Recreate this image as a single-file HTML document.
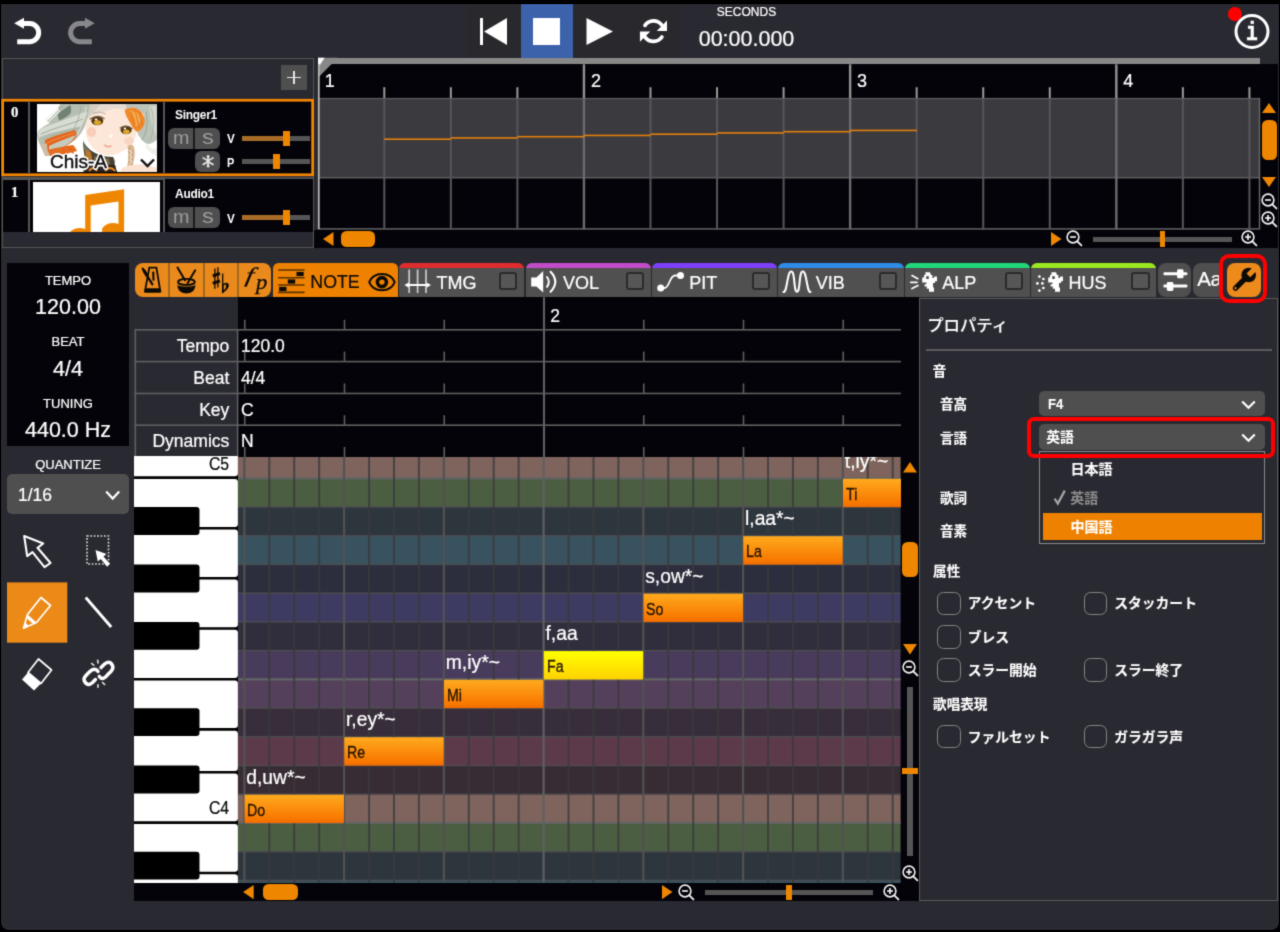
<!DOCTYPE html>
<html lang="ja"><head><meta charset="utf-8"><title>Editor</title>
<style>
*{box-sizing:border-box;margin:0;padding:0}
html,body{width:1280px;height:932px;background:#000;overflow:hidden}
body{font-family:"Liberation Sans","Noto Sans CJK JP",sans-serif;color:#fff;position:relative;-webkit-text-stroke-width:0.22px}
#root{position:absolute;left:0;top:0;width:1280px;height:932px;filter:url(#soft)}
#app{position:absolute;left:1.2px;top:4.2px;width:1277.6px;height:926.2px;background:#292931;border-radius:0 0 7.5px 7.5px;overflow:hidden}
.a{position:absolute}
.blk{background:#030309}
.t{position:absolute;white-space:nowrap;line-height:1}
.c{text-align:center}
.jp{font-family:"Liberation Sans","Noto Sans CJK JP",sans-serif;font-weight:bold;-webkit-text-stroke-width:0}
svg{position:absolute;overflow:visible}
.or{background:#ee8600}
.btn{background:#4f4f4f;border-radius:6px}
.tab{position:absolute;top:262.9px;height:34.4px;width:125.2px;background:#505050;border-radius:6px 6px 0 0;overflow:hidden}
.tab i{position:absolute;left:0;top:0;right:0;height:5px}
.tab b{position:absolute;left:100.2px;top:9.2px;width:18.2px;height:18px;border:2.5px solid #2b2b2b;border-radius:3px;background:#565656}
.tab span{position:absolute;left:37.4px;top:10.7px;font-size:18px;line-height:1;font-weight:normal}
.cb{position:absolute;width:23.6px;height:23.8px;border:1.9px solid #848484;border-radius:6.5px;background:#292931}
.pl{position:absolute;-webkit-text-stroke-width:0.12px;font-size:14px;line-height:1;white-space:nowrap;font-family:"Liberation Sans","Noto Sans CJK JP",sans-serif;font-weight:bold;color:#fff}
</style></head>
<body>
<svg width="0" height="0" style="position:absolute"><defs><filter id="soft" x="0" y="0" width="100%" height="100%" color-interpolation-filters="sRGB"><feConvolveMatrix order="3" kernelMatrix="1 4 1 4 20 4 1 4 1" divisor="40" edgeMode="duplicate" preserveAlpha="true"/></filter></defs></svg>
<div id="root">
<div id="app"></div>
<!-- toolbar -->
<div class="a" style="left:467px;top:4.2px;width:213px;height:53.8px;background:#28282d"></div>
<svg style="left:0;top:0" width="60" height="60" viewBox="0 0 60 60"><path d="M17.2 41.7 H29.6 A9.1 9.1 0 0 0 29.6 23.5 H23" fill="none" stroke="#fff" stroke-width="5"/><path d="M14.2 23.3 L24 17.8 V28.8 Z" fill="#fff"/></svg>
<svg style="left:0;top:0" width="120" height="60" viewBox="0 0 120 60"><path d="M91.8 41.7 H79.7 A9.1 9.1 0 0 1 79.7 23.5 H86" fill="none" stroke="#88888c" stroke-width="5"/><path d="M94.7 23.3 L85 17.8 V28.8 Z" fill="#88888c"/></svg>
<svg style="left:480px;top:18px" width="28" height="27" viewBox="0 0 28 27"><rect x="0" y="0" width="3" height="27" fill="#fff"/><path d="M4 13.5 L27 0 V27 Z" fill="#fff"/></svg>
<div class="a" style="left:520.7px;top:4.2px;width:52.3px;height:53.6px;background:#3b62ab"></div>
<div class="a" style="left:533px;top:18px;width:27px;height:27px;background:#fff"></div>
<svg style="left:586px;top:18px" width="27" height="27" viewBox="0 0 27 27"><path d="M0.5 0 L27 13.5 L0.5 27 Z" fill="#fff"/></svg>
<svg style="left:0;top:0" width="1280" height="60" viewBox="0 0 1280 60"><g fill="none" stroke="#fff" stroke-width="3.7" stroke-linecap="round"><path d="M645.0 25.4 A10.3 10.3 0 0 1 661.6 24.9"/><path d="M661.9 37 A10.3 10.3 0 0 1 645.4 37.5"/></g><path d="M667 20.6 V30.9 H656.7 Z" fill="#fff"/><path d="M639.95 41.8 V31.4 H650.3 Z" fill="#fff"/></svg>
<div class="t c" style="left:646.5px;top:6.3px;width:200px;font-size:12px;">SECONDS</div>
<div class="t c" style="left:646.5px;top:28.6px;width:200px;font-size:21.5px;">00:00.000</div>
<svg style="left:1226px;top:5px" width="50" height="50" viewBox="0 0 50 50"><circle cx="8.9" cy="9" r="7" fill="#f00"/><circle cx="26" cy="26.5" r="16" fill="#292931" stroke="#fff" stroke-width="3"/></svg>
<div class="t c" style="left:1232.3px;top:20.4px;width:40px;font-size:26.5px;font-family:'Liberation Mono',monospace;font-weight:bold;-webkit-text-stroke-width:0.5px;transform:scaleX(0.74)">i</div>
<!-- timeline -->
<div class="a blk" style="left:318px;top:58px;width:942px;height:172px;"></div>
<div class="a blk" style="left:314px;top:229.5px;width:964px;height:18.5px;"></div>
<div class="a blk" style="left:1260px;top:64px;width:18px;height:184px;"></div>
<div class="a" style="left:318px;top:57.6px;width:942px;height:6.9px;background:#888"></div>
<div class="a" style="left:318px;top:98.5px;width:942px;height:79px;background:#3a3a3f"></div>
<div class="t" style="left:324.8px;top:72.2px;font-size:18px;">1</div>
<div class="t" style="left:590.9px;top:72.2px;font-size:18px;">2</div>
<div class="t" style="left:857.1px;top:72.2px;font-size:18px;">3</div>
<div class="t" style="left:1123.3px;top:72.2px;font-size:18px;">4</div>
<svg style="left:0;top:0" width="1280" height="260" viewBox="0 0 1280 260"><rect x="318" y="97.9" width="942" height="1.3" fill="#5c5c5e"/><rect x="318" y="176.9" width="942" height="1.6" fill="#5c5c5e"/><rect x="318" y="228.2" width="942" height="1.4" fill="#6a6a6a"/><rect x="383.30" y="87.2" width="2" height="11" fill="#9a9a9a"/><rect x="383.30" y="98.3" width="2" height="131" fill="#56565a"/><rect x="449.85" y="87.2" width="2" height="11" fill="#9a9a9a"/><rect x="449.85" y="98.3" width="2" height="131" fill="#56565a"/><rect x="516.39" y="87.2" width="2" height="11" fill="#9a9a9a"/><rect x="516.39" y="98.3" width="2" height="131" fill="#56565a"/><rect x="582.74" y="64.3" width="2.4" height="34" fill="#929292"/><rect x="582.74" y="98.3" width="2.4" height="131" fill="#6c6c6e"/><rect x="649.49" y="87.2" width="2" height="11" fill="#9a9a9a"/><rect x="649.49" y="98.3" width="2" height="131" fill="#56565a"/><rect x="716.04" y="87.2" width="2" height="11" fill="#9a9a9a"/><rect x="716.04" y="98.3" width="2" height="131" fill="#56565a"/><rect x="782.59" y="87.2" width="2" height="11" fill="#9a9a9a"/><rect x="782.59" y="98.3" width="2" height="131" fill="#56565a"/><rect x="848.93" y="64.3" width="2.4" height="34" fill="#929292"/><rect x="848.93" y="98.3" width="2.4" height="131" fill="#6c6c6e"/><rect x="915.68" y="87.2" width="2" height="11" fill="#9a9a9a"/><rect x="915.68" y="98.3" width="2" height="131" fill="#56565a"/><rect x="982.23" y="87.2" width="2" height="11" fill="#9a9a9a"/><rect x="982.23" y="98.3" width="2" height="131" fill="#56565a"/><rect x="1048.78" y="87.2" width="2" height="11" fill="#9a9a9a"/><rect x="1048.78" y="98.3" width="2" height="131" fill="#56565a"/><rect x="1115.13" y="64.3" width="2.4" height="34" fill="#929292"/><rect x="1115.13" y="98.3" width="2.4" height="131" fill="#6c6c6e"/><rect x="1181.87" y="87.2" width="2" height="11" fill="#9a9a9a"/><rect x="1181.87" y="98.3" width="2" height="131" fill="#56565a"/><rect x="1248.42" y="87.2" width="2" height="11" fill="#9a9a9a"/><rect x="1248.42" y="98.3" width="2" height="131" fill="#56565a"/><rect x="1258.8" y="98" width="1.4" height="131" fill="#6a6a6a"/><path d="M318 57.8 H337.8 L318 77.8 Z" fill="#888"/><path d="M318 57.8 H324.6 L318 68 Z" fill="#fff"/><rect x="317.9" y="64" width="1.8" height="165" fill="#b4b4b4"/><rect x="384.30" y="138.40" width="66.748" height="1.6" fill="#e4800c"/><rect x="450.85" y="137.15" width="66.748" height="1.6" fill="#e4800c"/><rect x="517.39" y="135.90" width="66.748" height="1.6" fill="#e4800c"/><rect x="583.94" y="134.65" width="66.748" height="1.6" fill="#e4800c"/><rect x="650.49" y="133.40" width="66.748" height="1.6" fill="#e4800c"/><rect x="717.04" y="132.15" width="66.748" height="1.6" fill="#e4800c"/><rect x="783.59" y="130.90" width="66.748" height="1.6" fill="#e4800c"/><rect x="850.13" y="129.65" width="66.748" height="1.6" fill="#e4800c"/></svg>
<svg style="left:322.5px;top:232px" width="10.5" height="14" viewBox="0 0 10.5 14"><path d="M10.5 0 V14 L0 7.0 Z" fill="#ee8600"/></svg>
<div class="a" style="left:340.5px;top:231px;width:34.5px;height:16px;background:#ee8600;border-radius:5.5px"></div>
<svg style="left:1050.8px;top:232px" width="10.5" height="14" viewBox="0 0 10.5 14"><path d="M0 0 V14 L10.5 7.0 Z" fill="#ee8600"/></svg>
<svg style="left:1066.2px;top:230.0px" width="17" height="17" viewBox="0 0 17 17"><circle cx="7" cy="7" r="5.9" fill="none" stroke="#f2f2f2" stroke-width="1.6"/><path d="M11.3 11.3 L15.4 15.4" stroke="#f2f2f2" stroke-width="1.9" stroke-linecap="round"/><path d="M4.1 7 H9.9" stroke="#f2f2f2" stroke-width="1.7"/></svg>
<div class="a" style="left:1093px;top:236.5px;width:139px;height:5px;background:#555"></div>
<div class="a" style="left:1159.9px;top:231px;width:5.5px;height:15.6px;background:#ee8600"></div>
<svg style="left:1241.2px;top:230.0px" width="17" height="17" viewBox="0 0 17 17"><circle cx="7" cy="7" r="5.9" fill="none" stroke="#f2f2f2" stroke-width="1.6"/><path d="M11.3 11.3 L15.4 15.4" stroke="#f2f2f2" stroke-width="1.9" stroke-linecap="round"/><path d="M4.1 7 H9.9" stroke="#f2f2f2" stroke-width="1.7"/><path d="M7 4.1 V9.9" stroke="#f2f2f2" stroke-width="1.7"/></svg>
<svg style="left:1262px;top:103px" width="14" height="10" viewBox="0 0 14 10"><path d="M0 10 H14 L7.0 0 Z" fill="#ee8600"/></svg>
<div class="a" style="left:1261.5px;top:120px;width:15.5px;height:40px;background:#ee8600;border-radius:5.5px"></div>
<svg style="left:1262px;top:177px" width="14" height="10" viewBox="0 0 14 10"><path d="M0 0 H14 L7.0 10 Z" fill="#ee8600"/></svg>
<svg style="left:1260.7px;top:192.5px" width="17" height="17" viewBox="0 0 17 17"><circle cx="7" cy="7" r="5.9" fill="none" stroke="#f2f2f2" stroke-width="1.6"/><path d="M11.3 11.3 L15.4 15.4" stroke="#f2f2f2" stroke-width="1.9" stroke-linecap="round"/><path d="M4.1 7 H9.9" stroke="#f2f2f2" stroke-width="1.7"/></svg>
<svg style="left:1260.7px;top:211.0px" width="17" height="17" viewBox="0 0 17 17"><circle cx="7" cy="7" r="5.9" fill="none" stroke="#f2f2f2" stroke-width="1.6"/><path d="M11.3 11.3 L15.4 15.4" stroke="#f2f2f2" stroke-width="1.9" stroke-linecap="round"/><path d="M4.1 7 H9.9" stroke="#f2f2f2" stroke-width="1.7"/><path d="M7 4.1 V9.9" stroke="#f2f2f2" stroke-width="1.7"/></svg>
<!-- tracks -->
<div class="a" style="left:1.5px;top:58px;width:312.5px;height:190px;border:1.2px solid #545454"></div>
<div class="a" style="left:281px;top:65px;width:26px;height:25px;background:#4f4f4f"></div>
<div class="a" style="left:287.2px;top:76.7px;width:13.4px;height:1.7px;background:#e4e4e4"></div>
<div class="a" style="left:293.1px;top:70.7px;width:1.7px;height:13.6px;background:#e4e4e4"></div>
<svg style="left:0;top:0" width="320" height="180" viewBox="0 0 320 180"><rect x="2.65" y="100.25" width="310" height="74.5" fill="#030309" stroke="#f58600" stroke-width="2.7"/></svg>
<div class="a" style="left:27.7px;top:101px;width:2.5px;height:72.5px;background:#555"></div>
<div class="a" style="left:162.5px;top:101px;width:2.5px;height:72.5px;background:#555"></div>
<div class="t" style="left:11px;top:105.4px;font-size:14.8px;font-family:'Liberation Serif',serif;font-weight:bold">0</div>
<div class="a" style="left:36.5px;top:103.5px;width:120.2px;height:68.3px;background:#fff;overflow:hidden"><svg style="left:0;top:0" width="120.2" height="68.3" viewBox="0 0 120 68.3" preserveAspectRatio="none"><defs><filter id="tb" x="-5%" y="-5%" width="110%" height="110%"><feGaussianBlur stdDeviation="0.55"/></filter></defs><rect width="120" height="68.3" fill="#fff"/><g filter="url(#tb)"><path d="M52 -1 H90 C95 10 100 22 99 30 C97 39 91 45 84 48 C78 51.5 72 52 66 50.5 C58 48 51 40 49 31 C47.5 20 49 8 52 -1 Z" fill="#fde7d8"/><ellipse cx="54.5" cy="28" rx="4.5" ry="5" fill="#f6c4b0" opacity="0.75"/><ellipse cx="92" cy="37" rx="5" ry="4" fill="#f8cdb9" opacity="0.7"/><path d="M58 -1 H92 L90 6 C82 3.5 72 5 64 8.5 C58 11 54 12 51 11 C52 6 54 2 58 -1 Z" fill="#e6dbd1"/><path d="M50 0 H64 C60 4 56 9 50 15 Z" fill="#d3cdc2"/><path d="M88 -1 H121 V34 C118 38 114 40 110 40 C106 38 103 34 100 29 C104 24 107 18 107 11 C104 6 98 4 90 6 Z" fill="#bcc3b8"/><path d="M112 2 H121 V33 C117 30 114 22 112 2 Z" fill="#d2d6cd"/><path d="M109 8 C111 18 110 28 105 36" fill="none" stroke="#9aa498" stroke-width="0.9" stroke-linecap="round" /><path d="M114 4 C117 14 117 26 113 37" fill="none" stroke="#a4ada1" stroke-width="0.8" stroke-linecap="round" /><path d="M110 40 C112 44 116 46 121 44 V52 C114 50 110 46 108 42 Z" fill="#eef0ea"/><path d="M87.5 6 C92 3 98 3 102 6 C106 9 108 14 107.5 19 C106 24 103 27 100 28 C97 26 95 23 93 19 C90 14 88 10 87.5 6 Z" fill="#f0892a"/><path d="M92 7 C97 6 102 9 104 14 C104 19 101 22 98 23 C99 17 96 11 92 7 Z" fill="#f6a648"/><path d="M94 8 L98 24 M98 6 L102 24 M102 8 L105 21" fill="none" stroke="#d4701c" stroke-width="0.7" stroke-linecap="round" /><path d="M24 -1 H53 C52 8 50 17 47 24 C44 30 40 35 34 39 C26 44 18 48 9 51 C6 47 3 42 1 36 C0 32 0 29 2 26 C5 23 9 21 13 19 C11 18 10 17 9 15.5 C13 12 17 8 20 5 C21.5 3 23 1 24 -1 Z" fill="#b6beb1"/><path d="M33 1 C29 4 24 7 21 10 C21 13 21.5 15 22 16.5 C26 15 30 13 33 10 C34.5 7 34.5 4 33 1 Z" fill="#6f8273"/><path d="M3 25 C14 20 28 16 40 11 C44 9 47 8 50 8 C49 13 47 18 44 22 C34 25 20 27 8 31 C5 32 3 33 1.5 34 C1 31 1.5 28 3 25 Z" fill="#d8dcd2"/><path d="M8 15 C12 11 17 7 21 4 L23 7 C19 11 15 15 12 18 Z" fill="#f6f6f2"/><path d="M4 30 C16 24 32 21 46 15" fill="none" stroke="#9aa598" stroke-width="0.9" stroke-linecap="round" /><path d="M6 35 C18 29 32 26 44 24" fill="none" stroke="#a7b0a4" stroke-width="0.9" stroke-linecap="round" /><path d="M26 2 C22 6 16 12 11 17" fill="none" stroke="#8f9b8e" stroke-width="0.8" stroke-linecap="round" /><path d="M44 2 C43 10 40 20 35 28" fill="none" stroke="#a3ac9f" stroke-width="0.9" stroke-linecap="round" /><path d="M49 3 C48 12 45 22 40 31" fill="none" stroke="#d8dcd2" stroke-width="1.1" stroke-linecap="round" /><path d="M8 36 C16 32 27 29 38 26 C40 29 40 32 38 35 C32 40 25 45 18 49 C14 49 11 48 9 46 C8 43 7.5 39 8 36 Z" fill="#e5651c"/><path d="M12 42 C20 38 30 34 39 31 C37 35 33 39 28 42 C23 45 17 48 13 50 C12 47 12 45 12 42 Z" fill="#c5cbbf"/><path d="M11 46 C18 44 27 42 36 41 C38 43 39 45 40 47 C36 48 32 49 29 50 C27 50 25 50 23 52 H13 C12 50 11 48 11 46 Z" fill="#e66c20"/><path d="M10 39 C18 35 28 32 37 29" fill="none" stroke="#f4a060" stroke-width="0.8" stroke-linecap="round" /><path d="M26 44 L27 50 M32 43 L36 49" fill="none" stroke="#e0641a" stroke-width="1.4" stroke-linecap="round" /><path d="M4 40 C6 39 8 39 10 40 C10 45 11 49 13 52 H8 C6 48 4.5 44 4 40 Z" fill="#cdbda6"/><path d="M46 37 C48 41 52 46 58 49 C64 52 70 53 76 53 C78 56 78 60 77 63 L81 69 H46 C47 64 48 59 48 55 C47 49 46 43 46 37 Z" fill="#4a4034"/><path d="M46 37 C48 42 50 45 53 47 L52 52 C49 49 47 45 46 41 Z" fill="#6e7a68"/><path d="M48.0 45.0 L54.0 48.5 L55.0 56.0 L48.5 55.0 Z" fill="#b8782a" /><path d="M57.0 52.0 L66.0 54.0 L72.0 54.5 L73.0 62.0 L58.0 62.0 Z" fill="#77664a" /><path d="M61.0 53.0 L64.0 53.5 L64.0 61.0 L61.0 61.0 Z" fill="#c89a4a" /><path d="M50.0 60.0 L78.0 61.0 L80.0 69.0 L48.0 69.0 Z" fill="#2a2420" /><path d="M52 67 Q56 61 60 67 M68 67 Q73 61 78 67" fill="none" stroke="#ea8c28" stroke-width="1.9"/><path d="M90.5 42 C92.5 40.5 95 40.5 96.5 42 C98 46 98 52 96.5 57 C96 60 95.5 62 95 64 H90 C90.5 60 91 56 91 52 C91 48 90.5 45 90.5 42 Z" fill="#d9b892"/><path d="M92 44 L95.5 47 M92 48.5 L95.5 51.5 M92 53 L95.5 56 M92 57.5 L95 60" fill="none" stroke="#a8703c" stroke-width="0.9" stroke-linecap="round" /><path d="M92.6 45.0 L94.6 45.0 L94.6 60.0 L92.6 60.0 Z" fill="#f5eadc" opacity="0.6"/><path d="M85 64 C92 61 100 60 108 61 C113 62 117 63 121 64 V69 H83 Z" fill="#fbe2d2"/><ellipse cx="60.2" cy="16.8" rx="6" ry="4.4" fill="#54380f"/><ellipse cx="60.4" cy="18.6" rx="3.6" ry="2.4" fill="#dba62a"/><ellipse cx="59" cy="15.4" rx="1.4" ry="1" fill="#fff"/><path d="M53 15 Q60 10 67 14.5" fill="none" stroke="#6b5a48" stroke-width="1.2" stroke-linecap="round" /><ellipse cx="89" cy="26" rx="5.6" ry="4.2" fill="#54380f"/><ellipse cx="89.2" cy="27.8" rx="3.3" ry="2.3" fill="#dba62a"/><ellipse cx="87.8" cy="24.6" rx="1.3" ry="1" fill="#fff"/><path d="M83 24 Q89 20 95 24.5" fill="none" stroke="#6b5a48" stroke-width="1.1" stroke-linecap="round" /><path d="M56 9 Q62 6.5 68 9.5" fill="none" stroke="#b9a89a" stroke-width="0.9" stroke-linecap="round" /><ellipse cx="73.6" cy="32" rx="2" ry="1.6" fill="#fff"/><path d="M67.5 41.2 Q70.5 43.6 74 42" fill="none" stroke="#f0a48e" stroke-width="1.5" stroke-linecap="round" /></g></svg></div>
<div class="t" style="left:50px;top:152.2px;font-size:19px;color:#0a0a0a;-webkit-text-stroke:0.35px #0a0a0a;text-shadow:1.6px 0px 0.3px #fff,-1.6px 0px 0.3px #fff,0px 1.6px 0.3px #fff,0px -1.6px 0.3px #fff,1.15px 1.15px 0.3px #fff,-1.15px 1.15px 0.3px #fff,1.15px -1.15px 0.3px #fff,-1.15px -1.15px 0.3px #fff,1.5px 0.6px 0.3px #fff,-1.5px 0.6px 0.3px #fff,1.5px -0.6px 0.3px #fff,-1.5px -0.6px 0.3px #fff,0.6px 1.5px 0.3px #fff,-0.6px 1.5px 0.3px #fff,0.6px -1.5px 0.3px #fff,-0.6px -1.5px 0.3px #fff">Chis-A</div>
<svg style="left:140px;top:158px" width="15" height="10" viewBox="0 0 15 10"><path d="M1 1.5 L7.5 8 L14 1.5" fill="none" stroke="#111" stroke-width="2.4"/></svg>
<div class="t jp" style="left:174.5px;top:109px;font-size:12.5px;font-weight:bold;letter-spacing:-0.3px;transform:scaleX(0.96);transform-origin:0 0">Singer1</div>
<div class="a btn" style="left:168.3px;top:127.6px;width:51.6px;height:21.2px;"></div>
<div class="a" style="left:193.2px;top:127.6px;width:2px;height:21.2px;background:#1c1c20"></div>
<div class="t" style="left:172.6px;top:127.7px;font-size:19px;color:#9c9c9c;-webkit-text-stroke-width:0;transform:scaleX(1.04);transform-origin:0 0">m</div>
<div class="t" style="left:201.6px;top:127.9px;font-size:19.4px;color:#9c9c9c;-webkit-text-stroke-width:0;transform:scaleX(1.22);transform-origin:0 0">s</div>
<div class="t jp" style="left:227px;top:132.4px;font-size:13.6px;font-weight:bold;transform:scaleX(0.86);transform-origin:0 0">V</div>
<div class="a" style="left:242px;top:136px;width:68px;height:5px;background:#555"></div>
<div class="a" style="left:242px;top:136px;width:41px;height:5px;background:#a86c28"></div>
<div class="a" style="left:283px;top:131px;width:7px;height:15px;background:#ee8600"></div>
<div class="a btn" style="left:195px;top:151px;width:24.8px;height:20.5px;"></div>
<svg style="left:195.5px;top:151px" width="24.5" height="20" viewBox="0 0 24.5 20"><g stroke="#e4e4e4" stroke-width="1.7" fill="none" stroke-linecap="round"><path d="M12.1 6 V14.4 M7.2 7 Q10 8 12.1 10.2 Q14.2 8 17 7 M7.2 13.4 Q10 12.4 12.1 10.2 Q14.2 12.4 17 13.4"/></g><g fill="#e4e4e4"><circle cx="12.1" cy="5.4" r="1.5"/><circle cx="12.1" cy="15" r="1.5"/></g></svg>
<div class="t jp" style="left:227.2px;top:155.6px;font-size:13.6px;font-weight:bold;transform:scaleX(0.8);transform-origin:0 0">P</div>
<div class="a" style="left:242px;top:158.5px;width:68px;height:5px;background:#555"></div>
<div class="a" style="left:272.5px;top:153.5px;width:7px;height:15px;background:#ee8600"></div>
<div class="a" style="left:2.6px;top:179px;width:310.4px;height:53px;background:#030309"></div>
<div class="a" style="left:2.6px;top:176.6px;width:162.4px;height:3px;background:#555"></div>
<div class="a" style="left:165px;top:177.4px;width:148px;height:1.4px;background:#4c5058"></div>
<div class="a" style="left:27.7px;top:178px;width:2.5px;height:54px;background:#555"></div>
<div class="a" style="left:162.5px;top:178px;width:2.5px;height:54px;background:#555"></div>
<div class="t" style="left:11px;top:184.6px;font-size:14.8px;font-family:'Liberation Serif',serif;font-weight:bold">1</div>
<div class="a" style="left:32.8px;top:182.4px;width:127.4px;height:49.6px;background:#fff;overflow:hidden"><svg style="left:-32.8px;top:-182.4px" width="200" height="260" viewBox="0 0 200 260"><path d="M85.2 195 L124.1 189.3 V234 H118.5 V201.4 L90.7 205.6 V238 H85.2 Z" fill="#ee8600"/><ellipse cx="79.8" cy="235.4" rx="10.8" ry="7.4" fill="#ee8600"/><ellipse cx="113" cy="230.4" rx="11" ry="7.4" fill="#ee8600"/></svg></div>
<div class="t jp" style="left:174.5px;top:188.2px;font-size:12.5px;font-weight:bold;letter-spacing:-0.3px;transform:scaleX(0.96);transform-origin:0 0">Audio1</div>
<div class="a btn" style="left:168.3px;top:206.6px;width:51.6px;height:21.2px;"></div>
<div class="a" style="left:193.2px;top:206.6px;width:2px;height:21.2px;background:#1c1c20"></div>
<div class="t" style="left:172.6px;top:206.7px;font-size:19px;color:#9c9c9c;-webkit-text-stroke-width:0;transform:scaleX(1.04);transform-origin:0 0">m</div>
<div class="t" style="left:201.6px;top:206.9px;font-size:19.4px;color:#9c9c9c;-webkit-text-stroke-width:0;transform:scaleX(1.22);transform-origin:0 0">s</div>
<div class="t jp" style="left:227px;top:211.6px;font-size:13.6px;font-weight:bold;transform:scaleX(0.86);transform-origin:0 0">V</div>
<div class="a" style="left:242px;top:215px;width:68px;height:5px;background:#555"></div>
<div class="a" style="left:242px;top:215px;width:41px;height:5px;background:#a86c28"></div>
<div class="a" style="left:283px;top:210px;width:7px;height:15px;background:#ee8600"></div>
<!-- left panel -->
<div class="a blk" style="left:7px;top:263px;width:122px;height:183px;"></div>
<div class="t c" style="left:-32.0px;top:273.8px;width:200px;font-size:13px;">TEMPO</div>
<div class="t c" style="left:-32.0px;top:297.2px;width:200px;font-size:21.5px;">120.00</div>
<div class="t c" style="left:-32.0px;top:335.3px;width:200px;font-size:13px;">BEAT</div>
<div class="t c" style="left:-32.0px;top:358.8px;width:200px;font-size:21.5px;">4/4</div>
<div class="t c" style="left:-32.0px;top:396.5px;width:200px;font-size:13px;">TUNING</div>
<div class="t c" style="left:-32.0px;top:419.8px;width:200px;font-size:21.5px;">440.0 Hz</div>
<div class="t c" style="left:-32.0px;top:458px;width:200px;font-size:13px;">QUANTIZE</div>
<div class="a" style="left:7px;top:474px;width:122px;height:40px;background:#4f4f4f;border-radius:5px"></div>
<div class="t" style="left:18px;top:486.5px;font-size:17.5px;">1/16</div>
<svg style="left:105px;top:490px" width="16" height="11" viewBox="0 0 16 11"><path d="M1.2 1.5 L7.7 8.6 L14.2 1.5" fill="none" stroke="#fff" stroke-width="2.2"/></svg>
<svg style="left:0;top:0" width="80" height="660" viewBox="0 0 80 660"><rect x="7" y="582.4" width="60.3" height="60.3" fill="#ec8a18"/></svg>
<svg style="left:20px;top:532px" width="36" height="38" viewBox="0 0 36 38"><path d="M4.2 4 L23.2 11.5 L17.5 15.8 L30.5 31 L24.5 35.2 L12.5 20.2 L7.2 24.2 Z" fill="none" stroke="#fff" stroke-width="2.1" stroke-linejoin="round"/></svg>
<svg style="left:84px;top:533px" width="30" height="36" viewBox="0 0 30 36"><rect x="3" y="3" width="21.5" height="28" fill="none" stroke="#e0e0e0" stroke-width="1.6" stroke-dasharray="1.7 1.7"/><path d="M11.5 17 L22.5 21 L19.5 23.5 L26 31 L23 33.8 L16.8 26 L13.8 28.5 Z" fill="#fff"/></svg>
<svg style="left:20px;top:594px" width="36" height="38" viewBox="0 0 36 38"><path d="M21 3.5 L30.5 11.5 L16.5 28.5 L3.5 34.2 L7.5 20.5 Z" fill="none" stroke="#fff" stroke-width="1.7" stroke-linejoin="round"/><path d="M7.5 20.5 L16.5 28.5 L13 30 L6.6 24 Z" fill="#fff"/><path d="M5.2 28.5 L8.8 31.8 L3.5 34.2 Z" fill="#fff"/></svg>
<svg style="left:82px;top:594px" width="34" height="38" viewBox="0 0 34 38"><path d="M3.7 3.5 L29.2 33" stroke="#fff" stroke-width="2.8" fill="none"/></svg>
<svg style="left:19px;top:655px" width="38" height="38" viewBox="0 0 38 38"><path d="M19.5 4 L32.5 15 L22 28.5 L9 17.5 Z" fill="none" stroke="#fff" stroke-width="1.7" stroke-linejoin="round"/><path d="M9 17.5 L22 28.5 L15 35.5 L3 24.5 Z" fill="#fff"/></svg>
<svg style="left:0;top:0" width="1280" height="932" viewBox="0 0 1280 932"><g fill="none" stroke="#fff" stroke-width="3.5" stroke-linecap="round" stroke-linejoin="round"><path d="M97.95 671.44 Q96.6 669.2 94.2 669.2 Q92.2 669.3 89.65 671.83 L86.18 675.3 Q83.2 678.3 84.4 681 Q86 684.6 89.2 684.4 Q91 684.2 92.36 682.64 L95.44 679.55"/><path d="M99.31 676.46 Q100.7 678.4 102.8 678.4 Q104.8 678.3 107.8 674.53 L110.89 671.44 Q113.6 668.6 112.6 665.8 Q111 662.2 107.8 662.37 Q106 662.6 104.32 664.3 L101.04 667.58"/></g><g stroke="#dcdcdc" stroke-width="1.7" fill="none"><path d="M97.57 659.7 L98.15 663.7 M91.2 663.1 L94.3 665.7 M97.95 684.2 V687.7 M102.2 682.2 L105.1 685"/></g></svg>
<!-- editor -->
<div class="a blk" style="left:134.3px;top:297.3px;width:785px;height:604px;"></div>
<div class="a" style="left:134.3px;top:297.3px;width:103.9px;height:32.5px;background:#292931"></div>
<div class="a" style="left:134.3px;top:330px;width:103.9px;height:127px;background:#292931"></div>
<div class="t" style="left:135px;top:338.0px;width:94.3px;text-align:right;font-size:17.5px">Tempo</div>
<div class="t" style="left:241px;top:338.0px;font-size:17.5px;">120.0</div>
<div class="t" style="left:135px;top:369.8px;width:94.3px;text-align:right;font-size:17.5px">Beat</div>
<div class="t" style="left:241px;top:369.8px;font-size:17.5px;">4/4</div>
<div class="t" style="left:135px;top:401.6px;width:94.3px;text-align:right;font-size:17.5px">Key</div>
<div class="t" style="left:241px;top:401.6px;font-size:17.5px;">C</div>
<div class="t" style="left:135px;top:433.4px;width:94.3px;text-align:right;font-size:17.5px">Dynamics</div>
<div class="t" style="left:241px;top:433.4px;font-size:17.5px;">N</div>
<div class="t" style="left:550.2px;top:308px;font-size:17.5px;">2</div>
<svg style="left:0;top:0" width="1280" height="932" viewBox="0 0 1280 932"><rect x="134.8" y="329.00" width="766.2" height="1.6" fill="#606060"/><rect x="134.8" y="360.80" width="766.2" height="1.6" fill="#606060"/><rect x="134.8" y="392.65" width="766.2" height="1.6" fill="#606060"/><rect x="134.8" y="424.40" width="766.2" height="1.6" fill="#606060"/><rect x="134.5" y="329" width="1.6" height="128" fill="#606060"/><rect x="236.8" y="329" width="1.6" height="128" fill="#606060"/><rect x="243.95" y="319.80" width="1.6" height="10" fill="#5e5e5e"/><rect x="243.95" y="351.60" width="1.6" height="10" fill="#5e5e5e"/><rect x="243.95" y="383.45" width="1.6" height="10" fill="#5e5e5e"/><rect x="243.95" y="415.20" width="1.6" height="10" fill="#5e5e5e"/><rect x="243.95" y="447.00" width="1.6" height="10" fill="#5e5e5e"/><rect x="343.70" y="319.80" width="1.6" height="10" fill="#5e5e5e"/><rect x="343.70" y="351.60" width="1.6" height="10" fill="#5e5e5e"/><rect x="343.70" y="383.45" width="1.6" height="10" fill="#5e5e5e"/><rect x="343.70" y="415.20" width="1.6" height="10" fill="#5e5e5e"/><rect x="343.70" y="447.00" width="1.6" height="10" fill="#5e5e5e"/><rect x="443.45" y="319.80" width="1.6" height="10" fill="#5e5e5e"/><rect x="443.45" y="351.60" width="1.6" height="10" fill="#5e5e5e"/><rect x="443.45" y="383.45" width="1.6" height="10" fill="#5e5e5e"/><rect x="443.45" y="415.20" width="1.6" height="10" fill="#5e5e5e"/><rect x="443.45" y="447.00" width="1.6" height="10" fill="#5e5e5e"/><rect x="542.95" y="297.3" width="2.1" height="160" fill="#606060"/><rect x="642.95" y="319.80" width="1.6" height="10" fill="#5e5e5e"/><rect x="642.95" y="351.60" width="1.6" height="10" fill="#5e5e5e"/><rect x="642.95" y="383.45" width="1.6" height="10" fill="#5e5e5e"/><rect x="642.95" y="415.20" width="1.6" height="10" fill="#5e5e5e"/><rect x="642.95" y="447.00" width="1.6" height="10" fill="#5e5e5e"/><rect x="742.70" y="319.80" width="1.6" height="10" fill="#5e5e5e"/><rect x="742.70" y="351.60" width="1.6" height="10" fill="#5e5e5e"/><rect x="742.70" y="383.45" width="1.6" height="10" fill="#5e5e5e"/><rect x="742.70" y="415.20" width="1.6" height="10" fill="#5e5e5e"/><rect x="742.70" y="447.00" width="1.6" height="10" fill="#5e5e5e"/><rect x="842.45" y="319.80" width="1.6" height="10" fill="#5e5e5e"/><rect x="842.45" y="351.60" width="1.6" height="10" fill="#5e5e5e"/><rect x="842.45" y="383.45" width="1.6" height="10" fill="#5e5e5e"/><rect x="842.45" y="415.20" width="1.6" height="10" fill="#5e5e5e"/><rect x="842.45" y="447.00" width="1.6" height="10" fill="#5e5e5e"/></svg>
<svg style="left:134.3px;top:456.4px;overflow:hidden" width="104.1" height="426.2" viewBox="134.3 456.4 104.1 426.2"><rect x="134.3" y="400" width="104.1" height="600" fill="#000"/><path d="M134.3 429.30 H235.20 Q238.20 429.30 238.20 432.30 V473.70 Q238.20 476.70 235.20 476.70 H134.3 Z" fill="#fff"/><path d="M134.3 479.30 H235.20 Q238.20 479.30 238.20 482.30 V524.40 Q238.20 527.40 235.20 527.40 H134.3 Z" fill="#fff"/><path d="M134.3 530.00 H235.20 Q238.20 530.00 238.20 533.00 V574.30 Q238.20 577.30 235.20 577.30 H134.3 Z" fill="#fff"/><path d="M134.3 579.90 H235.20 Q238.20 579.90 238.20 582.90 V624.60 Q238.20 627.60 235.20 627.60 H134.3 Z" fill="#fff"/><path d="M134.3 630.20 H235.20 Q238.20 630.20 238.20 633.20 V675.40 Q238.20 678.40 235.20 678.40 H134.3 Z" fill="#fff"/><path d="M134.3 681.00 H235.20 Q238.20 681.00 238.20 684.00 V725.45 Q238.20 728.45 235.20 728.45 H134.3 Z" fill="#fff"/><path d="M134.3 731.05 H235.20 Q238.20 731.05 238.20 734.05 V768.30 Q238.20 771.30 235.20 771.30 H134.3 Z" fill="#fff"/><path d="M134.3 773.90 H235.20 Q238.20 773.90 238.20 776.90 V818.70 Q238.20 821.70 235.20 821.70 H134.3 Z" fill="#fff"/><path d="M134.3 824.30 H235.20 Q238.20 824.30 238.20 827.30 V869.10 Q238.20 872.10 235.20 872.10 H134.3 Z" fill="#fff"/><path d="M134.3 874.70 H235.20 Q238.20 874.70 238.20 877.70 V919.50 Q238.20 922.50 235.20 922.50 H134.3 Z" fill="#fff"/><path d="M134.3 507.52 H196.7 Q199.8 507.52 199.8 510.52 V532.34 Q199.8 535.34 196.7 535.34 H134.3 Z" fill="#000"/><path d="M134.3 564.96 H196.7 Q199.8 564.96 199.8 567.96 V589.78 Q199.8 592.78 196.7 592.78 H134.3 Z" fill="#000"/><path d="M134.3 622.40 H196.7 Q199.8 622.40 199.8 625.40 V647.22 Q199.8 650.22 196.7 650.22 H134.3 Z" fill="#000"/><path d="M134.3 708.56 H196.7 Q199.8 708.56 199.8 711.56 V733.38 Q199.8 736.38 196.7 736.38 H134.3 Z" fill="#000"/><path d="M134.3 766.00 H196.7 Q199.8 766.00 199.8 769.00 V790.82 Q199.8 793.82 196.7 793.82 H134.3 Z" fill="#000"/><path d="M134.3 852.16 H196.7 Q199.8 852.16 199.8 855.16 V876.98 Q199.8 879.98 196.7 879.98 H134.3 Z" fill="#000"/></svg>
<div class="a" style="left:134px;top:457px;width:104px;height:426px;overflow:hidden"><div class="t" style="left:74.6px;top:-1.4px;font-size:17.5px;color:#0a0a0a;transform:scaleX(0.9);transform-origin:0 0">C5</div><div class="t" style="left:74.6px;top:343.3px;font-size:17.5px;color:#0a0a0a;transform:scaleX(0.9);transform-origin:0 0">C4</div></div>
<svg style="left:238.4px;top:457.0px;overflow:hidden" width="662.6" height="425.6" viewBox="238.4 457.0 662.6 425.6"><rect x="238.4" y="449.58" width="662.6" height="29.02" fill="#7e645c"/><rect x="238.4" y="478.30" width="662.6" height="29.02" fill="#4c5e41"/><rect x="238.4" y="507.02" width="662.6" height="29.02" fill="#2e363d"/><rect x="238.4" y="535.74" width="662.6" height="29.02" fill="#38525f"/><rect x="238.4" y="564.46" width="662.6" height="29.02" fill="#2d2e3d"/><rect x="238.4" y="593.18" width="662.6" height="29.02" fill="#3e3b62"/><rect x="238.4" y="621.90" width="662.6" height="29.02" fill="#302e3d"/><rect x="238.4" y="650.62" width="662.6" height="29.02" fill="#493b5c"/><rect x="238.4" y="679.34" width="662.6" height="29.02" fill="#55405c"/><rect x="238.4" y="708.06" width="662.6" height="29.02" fill="#382e3b"/><rect x="238.4" y="736.78" width="662.6" height="29.02" fill="#5d3a4a"/><rect x="238.4" y="765.50" width="662.6" height="29.02" fill="#382c34"/><rect x="238.4" y="794.22" width="662.6" height="29.02" fill="#7e645c"/><rect x="238.4" y="822.94" width="662.6" height="29.02" fill="#4c5e41"/><rect x="238.4" y="851.66" width="662.6" height="29.02" fill="#2e363d"/><rect x="238.4" y="880.38" width="662.6" height="29.02" fill="#38525f"/><rect x="238.4" y="477.20" width="662.6" height="2.2" fill="#626466"/><rect x="238.4" y="506.32" width="662.6" height="1.4" fill="#4c4c50"/><rect x="238.4" y="535.04" width="662.6" height="1.4" fill="#4c4c50"/><rect x="238.4" y="563.76" width="662.6" height="1.4" fill="#4c4c50"/><rect x="238.4" y="592.48" width="662.6" height="1.4" fill="#4c4c50"/><rect x="238.4" y="621.20" width="662.6" height="1.4" fill="#4c4c50"/><rect x="238.4" y="649.92" width="662.6" height="1.4" fill="#4c4c50"/><rect x="238.4" y="678.24" width="662.6" height="2.2" fill="#626466"/><rect x="238.4" y="707.36" width="662.6" height="1.4" fill="#4c4c50"/><rect x="238.4" y="736.08" width="662.6" height="1.4" fill="#4c4c50"/><rect x="238.4" y="764.80" width="662.6" height="1.4" fill="#4c4c50"/><rect x="238.4" y="793.52" width="662.6" height="1.4" fill="#4c4c50"/><rect x="238.4" y="821.84" width="662.6" height="2.2" fill="#626466"/><rect x="238.4" y="850.96" width="662.6" height="1.4" fill="#4c4c50"/><rect x="238.4" y="879.68" width="662.6" height="1.4" fill="#4c4c50"/><rect x="218.81" y="457.0" width="2" height="425.6" fill="#3a3a3c" fill-opacity="0.8"/><rect x="243.70" y="457.0" width="2.1" height="425.6" fill="#525252"/><rect x="268.69" y="457.0" width="2" height="425.6" fill="#3a3a3c" fill-opacity="0.8"/><rect x="293.62" y="457.0" width="2" height="425.6" fill="#3a3a3c" fill-opacity="0.8"/><rect x="318.56" y="457.0" width="2" height="425.6" fill="#3a3a3c" fill-opacity="0.8"/><rect x="343.45" y="457.0" width="2.1" height="425.6" fill="#525252"/><rect x="368.44" y="457.0" width="2" height="425.6" fill="#3a3a3c" fill-opacity="0.8"/><rect x="393.38" y="457.0" width="2" height="425.6" fill="#3a3a3c" fill-opacity="0.8"/><rect x="418.31" y="457.0" width="2" height="425.6" fill="#3a3a3c" fill-opacity="0.8"/><rect x="443.20" y="457.0" width="2.1" height="425.6" fill="#525252"/><rect x="468.19" y="457.0" width="2" height="425.6" fill="#3a3a3c" fill-opacity="0.8"/><rect x="493.12" y="457.0" width="2" height="425.6" fill="#3a3a3c" fill-opacity="0.8"/><rect x="518.06" y="457.0" width="2" height="425.6" fill="#3a3a3c" fill-opacity="0.8"/><rect x="542.95" y="457.0" width="2.1" height="425.6" fill="#606060"/><rect x="567.94" y="457.0" width="2" height="425.6" fill="#3a3a3c" fill-opacity="0.8"/><rect x="592.88" y="457.0" width="2" height="425.6" fill="#3a3a3c" fill-opacity="0.8"/><rect x="617.81" y="457.0" width="2" height="425.6" fill="#3a3a3c" fill-opacity="0.8"/><rect x="642.70" y="457.0" width="2.1" height="425.6" fill="#525252"/><rect x="667.69" y="457.0" width="2" height="425.6" fill="#3a3a3c" fill-opacity="0.8"/><rect x="692.62" y="457.0" width="2" height="425.6" fill="#3a3a3c" fill-opacity="0.8"/><rect x="717.56" y="457.0" width="2" height="425.6" fill="#3a3a3c" fill-opacity="0.8"/><rect x="742.45" y="457.0" width="2.1" height="425.6" fill="#525252"/><rect x="767.44" y="457.0" width="2" height="425.6" fill="#3a3a3c" fill-opacity="0.8"/><rect x="792.38" y="457.0" width="2" height="425.6" fill="#3a3a3c" fill-opacity="0.8"/><rect x="817.31" y="457.0" width="2" height="425.6" fill="#3a3a3c" fill-opacity="0.8"/><rect x="842.20" y="457.0" width="2.1" height="425.6" fill="#525252"/><rect x="867.19" y="457.0" width="2" height="425.6" fill="#3a3a3c" fill-opacity="0.8"/><rect x="892.12" y="457.0" width="2" height="425.6" fill="#3a3a3c" fill-opacity="0.8"/></svg>
<div class="a" style="left:238.2px;top:457px;width:662.8px;height:425.6px;overflow:hidden"><div class="a" style="left:-238.2px;top:-457px;width:1280px;height:932px">
<svg style="left:0;top:0" width="1280" height="932" viewBox="0 0 1280 932"><defs><linearGradient id="gn" x1="0" y1="0" x2="0" y2="1"><stop offset="0" stop-color="#ffaa1e"/><stop offset="0.85" stop-color="#f87800"/><stop offset="1" stop-color="#f06c00"/></linearGradient><linearGradient id="gy" x1="0" y1="0" x2="0" y2="1"><stop offset="0" stop-color="#ffff00"/><stop offset="1" stop-color="#ffd200"/></linearGradient></defs><rect x="244.50" y="794.67" width="99.45" height="28.42" fill="url(#gn)"/><rect x="344.25" y="737.23" width="99.45" height="28.42" fill="url(#gn)"/><rect x="444.00" y="679.79" width="99.45" height="28.42" fill="url(#gn)"/><rect x="543.75" y="651.07" width="99.45" height="28.42" fill="url(#gy)"/><rect x="643.50" y="593.63" width="99.45" height="28.42" fill="url(#gn)"/><rect x="743.25" y="536.19" width="99.45" height="28.42" fill="url(#gn)"/><rect x="843.00" y="478.75" width="99.45" height="28.42" fill="url(#gn)"/></svg>
<div class="t" style="left:247.2px;top:801.5px;font-size:16.3px;color:#241400;font-weight:normal;-webkit-text-stroke:0.35px #241400;transform:scaleX(0.87);transform-origin:0 0">Do</div>
<div class="t" style="left:246.2px;top:767.6px;font-size:19.3px;">d,uw*~</div>
<div class="t" style="left:347.0px;top:744.1px;font-size:16.3px;color:#241400;font-weight:normal;-webkit-text-stroke:0.35px #241400;transform:scaleX(0.87);transform-origin:0 0">Re</div>
<div class="t" style="left:346.0px;top:710.2px;font-size:19.3px;">r,ey*~</div>
<div class="t" style="left:446.8px;top:686.6px;font-size:16.3px;color:#241400;font-weight:normal;-webkit-text-stroke:0.35px #241400;transform:scaleX(0.87);transform-origin:0 0">Mi</div>
<div class="t" style="left:445.8px;top:652.7px;font-size:19.3px;">m,iy*~</div>
<div class="t" style="left:546.5px;top:657.9px;font-size:16.3px;color:#241400;font-weight:normal;-webkit-text-stroke:0.35px #241400;transform:scaleX(0.87);transform-origin:0 0">Fa</div>
<div class="t" style="left:545.5px;top:624.0px;font-size:19.3px;">f,aa</div>
<div class="t" style="left:646.2px;top:600.5px;font-size:16.3px;color:#241400;font-weight:normal;-webkit-text-stroke:0.35px #241400;transform:scaleX(0.87);transform-origin:0 0">So</div>
<div class="t" style="left:645.2px;top:566.6px;font-size:19.3px;">s,ow*~</div>
<div class="t" style="left:746.0px;top:543.0px;font-size:16.3px;color:#241400;font-weight:normal;-webkit-text-stroke:0.35px #241400;transform:scaleX(0.87);transform-origin:0 0">La</div>
<div class="t" style="left:745.0px;top:509.1px;font-size:19.3px;">l,aa*~</div>
<div class="t" style="left:845.8px;top:485.6px;font-size:16.3px;color:#241400;font-weight:normal;-webkit-text-stroke:0.35px #241400;transform:scaleX(0.87);transform-origin:0 0">Ti</div>
<div class="t" style="left:844.8px;top:451.7px;font-size:19.3px;">t,iy*~</div>
</div></div>
<svg style="left:903.2px;top:461.6px" width="14" height="10.4" viewBox="0 0 14 10.4"><path d="M0 10.4 H14 L7.0 0 Z" fill="#ee8600"/></svg>
<div class="a" style="left:902px;top:542px;width:16px;height:35px;background:#ee8600;border-radius:5.5px"></div>
<svg style="left:903.2px;top:644.1px" width="14" height="10.4" viewBox="0 0 14 10.4"><path d="M0 0 H14 L7.0 10.4 Z" fill="#ee8600"/></svg>
<svg style="left:901.7px;top:660.0px" width="17" height="17" viewBox="0 0 17 17"><circle cx="7" cy="7" r="5.9" fill="none" stroke="#f2f2f2" stroke-width="1.6"/><path d="M11.3 11.3 L15.4 15.4" stroke="#f2f2f2" stroke-width="1.9" stroke-linecap="round"/><path d="M4.1 7 H9.9" stroke="#f2f2f2" stroke-width="1.7"/></svg>
<div class="a" style="left:907.3px;top:687px;width:5.5px;height:169px;background:#555"></div>
<div class="a" style="left:902px;top:768.3px;width:16px;height:5.5px;background:#ee8600"></div>
<svg style="left:901.9000000000001px;top:865.2px" width="17" height="17" viewBox="0 0 17 17"><circle cx="7" cy="7" r="5.9" fill="none" stroke="#f2f2f2" stroke-width="1.6"/><path d="M11.3 11.3 L15.4 15.4" stroke="#f2f2f2" stroke-width="1.9" stroke-linecap="round"/><path d="M4.1 7 H9.9" stroke="#f2f2f2" stroke-width="1.7"/><path d="M7 4.1 V9.9" stroke="#f2f2f2" stroke-width="1.7"/></svg>
<svg style="left:242.7px;top:885.3px" width="10.7" height="14.2" viewBox="0 0 10.7 14.2"><path d="M10.7 0 V14.2 L0 7.1 Z" fill="#ee8600"/></svg>
<div class="a" style="left:263.1px;top:884.2px;width:35px;height:15.5px;background:#ee8600;border-radius:5.5px"></div>
<svg style="left:662.4px;top:885px" width="10.5" height="14.2" viewBox="0 0 10.5 14.2"><path d="M0 0 V14.2 L10.5 7.1 Z" fill="#ee8600"/></svg>
<svg style="left:678.3000000000001px;top:884.0px" width="17" height="17" viewBox="0 0 17 17"><circle cx="7" cy="7" r="5.9" fill="none" stroke="#f2f2f2" stroke-width="1.6"/><path d="M11.3 11.3 L15.4 15.4" stroke="#f2f2f2" stroke-width="1.9" stroke-linecap="round"/><path d="M4.1 7 H9.9" stroke="#f2f2f2" stroke-width="1.7"/></svg>
<div class="a" style="left:705px;top:889.6px;width:168.3px;height:5.2px;background:#555"></div>
<div class="a" style="left:786.2px;top:884.5px;width:5.5px;height:15px;background:#ee8600"></div>
<svg style="left:883.2px;top:884.0px" width="17" height="17" viewBox="0 0 17 17"><circle cx="7" cy="7" r="5.9" fill="none" stroke="#f2f2f2" stroke-width="1.6"/><path d="M11.3 11.3 L15.4 15.4" stroke="#f2f2f2" stroke-width="1.9" stroke-linecap="round"/><path d="M4.1 7 H9.9" stroke="#f2f2f2" stroke-width="1.7"/><path d="M7 4.1 V9.9" stroke="#f2f2f2" stroke-width="1.7"/></svg>
<!-- properties -->
<div class="a" style="left:919.3px;top:297.6px;width:358.5px;height:603.4px;border:1.3px solid #585858;background:#292931"></div>
<div class="pl" style="left:927.2px;top:312.9px;font-size:16.4px;line-height:24.599999999999998px;font-weight:500">プロパティ</div>
<div class="a" style="left:926px;top:349.3px;width:346px;height:1.4px;background:#5c5c5c"></div>
<div class="pl" style="left:932.6px;top:361.9px;font-size:13.8px;line-height:20.700000000000003px;">音</div>
<div class="pl" style="left:940px;top:395.4px;font-size:13.5px;line-height:20.25px;">音高</div>
<div class="a" style="left:1039px;top:390.6px;width:226.2px;height:25.8px;background:#4f4f4f;border-radius:5px"></div>
<div class="pl" style="left:1047.5px;top:393.0px;font-size:15.2px;line-height:22.799999999999997px;transform:scaleX(0.86);transform-origin:0 50%">F4</div>
<svg style="left:1241px;top:399.5px" width="15" height="10" viewBox="0 0 15 10"><path d="M1.2 1.4 L7.5 7.8 L13.8 1.4" fill="none" stroke="#fff" stroke-width="2.2"/></svg>
<div class="pl" style="left:940px;top:428.9px;font-size:13.5px;line-height:20.25px;">言語</div>
<div class="a" style="left:1039px;top:424.2px;width:226.2px;height:25.8px;background:#4f4f4f;border-radius:5px"></div>
<div class="pl" style="left:1046.2px;top:428.3px;font-size:13.8px;line-height:20.700000000000003px;">英語</div>
<svg style="left:1241px;top:433px" width="15" height="10" viewBox="0 0 15 10"><path d="M1.2 1.4 L7.5 7.8 L13.8 1.4" fill="none" stroke="#fff" stroke-width="2.2"/></svg>
<div class="pl" style="left:940px;top:488.9px;font-size:13.5px;line-height:20.25px;">歌詞</div>
<div class="pl" style="left:940px;top:521.9px;font-size:13.5px;line-height:20.25px;">音素</div>
<div class="a" style="left:1039px;top:450.5px;width:226.2px;height:93.5px;border:1.2px solid #8a8a8a;background:#292931"></div>
<div class="pl" style="left:1070.6px;top:458.9px;font-size:14px;line-height:21.0px;">日本語</div>
<svg style="left:1053px;top:489px" width="14" height="18" viewBox="0 0 14 18"><path d="M1.6 9.6 L4.8 14.6 L11.8 1.6" fill="none" stroke="#a4a4a4" stroke-width="2.3"/></svg>
<div class="pl" style="left:1070.2px;top:488.1px;font-size:14px;line-height:21.0px;color:#8c8c8c">英語</div>
<div class="a" style="left:1043px;top:513px;width:218.5px;height:26.6px;background:#ee8200"></div>
<div class="pl" style="left:1070.6px;top:516.8px;font-size:14px;line-height:21.0px;">中国語</div>
<div class="a" style="left:1027.3px;top:417.3px;width:247.3px;height:41px;border:4.6px solid #ff0000;border-radius:7px"></div>
<div class="pl" style="left:933.1px;top:562.0px;font-size:13.6px;line-height:20.4px;">属性</div>
<div class="cb" style="left:937.3px;top:591.5px"></div>
<div class="pl" style="left:967.7px;top:594.4px;font-size:13.8px;line-height:20.700000000000003px;">アクセント</div>
<div class="cb" style="left:1083.8px;top:591.5px"></div>
<div class="pl" style="left:1114.2px;top:594.4px;font-size:13.8px;line-height:20.700000000000003px;">スタッカート</div>
<div class="cb" style="left:937.3px;top:625.1px"></div>
<div class="pl" style="left:967.7px;top:628.0px;font-size:13.8px;line-height:20.700000000000003px;">ブレス</div>
<div class="cb" style="left:937.3px;top:658.3px"></div>
<div class="pl" style="left:967.7px;top:661.2px;font-size:13.8px;line-height:20.700000000000003px;">スラー開始</div>
<div class="cb" style="left:1083.8px;top:658.3px"></div>
<div class="pl" style="left:1114.2px;top:661.2px;font-size:13.8px;line-height:20.700000000000003px;">スラー終了</div>
<div class="pl" style="left:933.1px;top:695.0px;font-size:13.6px;line-height:20.4px;">歌唱表現</div>
<div class="cb" style="left:937.3px;top:724.6px"></div>
<div class="pl" style="left:967.7px;top:727.5px;font-size:13.8px;line-height:20.700000000000003px;">ファルセット</div>
<div class="cb" style="left:1083.8px;top:724.6px"></div>
<div class="pl" style="left:1114.2px;top:727.5px;font-size:13.8px;line-height:20.700000000000003px;">ガラガラ声</div>
<!-- tabs -->
<div class="a" style="left:134.8px;top:263px;width:136.2px;height:33.8px;background:#ea8a1c;border-radius:8px"></div>
<div class="a" style="left:168.1px;top:263px;width:2px;height:33.8px;background:#a2681e"></div>
<div class="a" style="left:202.6px;top:263px;width:2px;height:33.8px;background:#a2681e"></div>
<div class="a" style="left:237px;top:263px;width:2px;height:33.8px;background:#a2681e"></div>
<div class="a" style="left:272.8px;top:262.8px;width:125.1px;height:34.4px;background:#ee8200;border-radius:5.5px 5.5px 0 0"></div>
<div class="t" style="left:310.3px;top:274.4px;font-size:17.8px;color:#0c0a06">NOTE</div>
<div class="t" style="left:246.3px;top:265.2px;font-size:20.8px;font-family:'Liberation Serif',serif;font-style:italic;color:#0c0a06;transform:skewX(-10deg) scaleX(1.4);transform-origin:0 50%;-webkit-text-stroke:0.2px #0c0a06">f</div>
<div class="t" style="left:255.8px;top:271.6px;font-size:20.6px;font-family:'Liberation Serif',serif;font-style:italic;color:#0c0a06;transform:scaleX(1.1);transform-origin:0 0;-webkit-text-stroke:0.25px #0c0a06">p</div>
<svg style="left:0;top:0" width="1280" height="932" viewBox="0 0 1280 932"><path d="M149.3 267.7 H156.4 L160.3 291 H145 Z" fill="none" stroke="#0c0a06" stroke-width="1.8" stroke-linejoin="miter"/><path d="M145.4 288.2 H160 L160.9 292.7 H144.4 Z" fill="#0c0a06"/><path d="M153.2 271.6 L153.5 280.6" stroke="#0c0a06" stroke-width="2.1" fill="none"/><path d="M142.7 268.6 L152.4 284.4" stroke="#0c0a06" stroke-width="2.2" stroke-linecap="round" fill="none"/><path d="M144.2 271 L146.6 275" stroke="#0c0a06" stroke-width="3.2" stroke-linecap="round" fill="none"/><ellipse cx="186.4" cy="281.9" rx="8.4" ry="3" fill="none" stroke="#0c0a06" stroke-width="1.8"/><path d="M177.3 284 Q177.3 293.4 186.4 293.4 Q195.5 293.4 195.5 284 Q195.5 286.6 186.4 286.6 Q177.3 286.6 177.3 284 Z" fill="#0c0a06"/><path d="M177.5 267.5 L185 280.3 M195.2 270.3 L187.5 283.2" stroke="#0c0a06" stroke-width="2" stroke-linecap="round" fill="none"/><path d="M214.9 268.6 V288.8 M217.9 267.2 V287.4" stroke="#0c0a06" stroke-width="1.3" fill="none"/><path d="M212.8 276 L219.9 273.4 M212.8 283.4 L219.9 280.8" stroke="#0c0a06" stroke-width="3" fill="none"/><path d="M222.7 273.4 V292.4" stroke="#0c0a06" stroke-width="1.3" fill="none"/><path d="M222.8 285 Q226.2 282.4 227.8 284.2 Q229.4 287 222.8 292.2 Z" fill="none" stroke="#0c0a06" stroke-width="1.6"/><path d="M225.4 284.4 Q228.6 283.4 228.2 286.2 Q227.4 288.6 224.4 290.6 Q227 287.4 225.4 284.4 Z" fill="#0c0a06"/><g stroke="#4a2a00" stroke-width="1.6" stroke-opacity="0.9"><path d="M278.2 270 H304.6 M278.2 277.7 H304.6 M278.2 285 H304.6 M278.2 292.4 H304.6"/></g><g fill="#0c0a06"><rect x="296.5" y="271.9" width="7.2" height="4.2"/><rect x="287.8" y="279.4" width="7.4" height="4.2"/><rect x="279.1" y="286.8" width="7.4" height="4.3"/></g><path d="M369.2 282.1 C373.6 271.2 390.3 271.2 394.7 282.1 C390.3 293 373.6 293 369.2 282.1 Z" fill="none" stroke="#0c0a06" stroke-width="2" stroke-linejoin="round"/><circle cx="381.9" cy="282.1" r="4.5" fill="none" stroke="#0c0a06" stroke-width="3.6"/></svg>
<div class="tab" style="left:399.0px"><i style="background:#e02c2c"></i><svg style="left:0;top:0" width="40" height="35" viewBox="0 0 40 35"><g stroke="#cdcdcd" stroke-width="1.7" fill="none"><path d="M10.2 6.6 V30 M18.6 6.6 V30 M27 6.6 V30"/></g><path d="M8.5 22.1 H29" stroke="#fff" stroke-width="2"/><path d="M5.4 22.1 L9.8 19.4 V24.8 Z M32 22.1 L27.6 19.4 V24.8 Z" fill="#fff"/></svg><span>TMG</span><b></b></div>
<div class="tab" style="left:525.5px"><i style="background:#c24cc8"></i><svg style="left:0;top:0" width="40" height="35" viewBox="0 0 40 35"><path d="M5.2 14.4 H10.4 L17.2 8 V29.6 L10.4 23.4 H5.2 Z" fill="#fff"/><path d="M21 14 Q24.6 18.8 21 23.8" fill="none" stroke="#fff" stroke-width="2" stroke-linecap="round"/><path d="M24.6 8.8 Q34 18.8 24.6 28.8" fill="none" stroke="#fff" stroke-width="2.1" stroke-linecap="round"/></svg><span>VOL</span><b></b></div>
<div class="tab" style="left:651.9px"><i style="background:#7c40fa"></i><svg style="left:0;top:0" width="40" height="35" viewBox="0 0 40 35"><path d="M9 25 H12.5 C17.5 25 17.5 12.5 23 12.5 H28.5" fill="none" stroke="#fff" stroke-width="1.8"/><circle cx="8.7" cy="25" r="3.5" fill="#fff"/><circle cx="28.5" cy="12.5" r="3.5" fill="#fff"/></svg><span>PIT</span><b></b></div>
<div class="tab" style="left:778.4px"><i style="background:#2c8ce8"></i><svg style="left:0;top:0" width="40" height="35" viewBox="0 0 40 35"><path d="M5.5 29 C9.5 29 9 8.5 13.2 8.5 C17.4 8.5 15.4 28.6 19 28.6 C22.6 28.6 20.6 8.5 24.8 8.5 C29 8.5 28.5 29 32.5 29" fill="none" stroke="#fff" stroke-width="2.1" stroke-linecap="round"/></svg><span>VIB</span><b></b></div>
<div class="tab" style="left:904.8px"><i style="background:#20d87c"></i><svg style="left:0;top:0" width="40" height="35" viewBox="0 0 40 35"><g stroke="#fff" stroke-width="1.7" fill="none" stroke-linecap="round"><path d="M7 12.6 L12.8 15.8 M5.8 19.3 H12 M7 25.6 L13 22.6"/></g><path d="M20.4 9.2 H25 L26 12 H27.4 V15 H28.8 L29.4 13.4 H32 V18.2 H30 V20 H28 V24.4 H29 V28.8 H24 V25.8 H21.8 V23.6 H19.6 V21.2 H21.4 V19.4 H17.2 V14.6 H19 V12 H20.4 Z" fill="#fff"/><rect x="21.2" y="13.2" width="2.6" height="2.8" fill="#505050"/></svg><span>ALP</span><b></b></div>
<div class="tab" style="left:1031.2px"><i style="background:#9ce820"></i><svg style="left:0;top:0" width="40" height="35" viewBox="0 0 40 35"><g fill="#fff"><circle cx="8.4" cy="13.6" r="1.35"/><circle cx="12.4" cy="16" r="1.35"/><circle cx="6.4" cy="20.4" r="1.35"/><circle cx="11.4" cy="20.4" r="1.35"/><circle cx="12.4" cy="25" r="1.35"/><circle cx="8.4" cy="27.6" r="1.35"/></g><path d="M20.4 9.2 H25 L26 12 H27.4 V15 H28.8 L29.4 13.4 H32 V18.2 H30 V20 H28 V24.4 H29 V28.8 H24 V25.8 H21.8 V23.6 H19.6 V21.2 H21.4 V19.4 H17.2 V14.6 H19 V12 H20.4 Z" fill="#fff"/><rect x="21.2" y="13.2" width="2.6" height="2.8" fill="#505050"/></svg><span>HUS</span><b></b></div>
<div class="a" style="left:1158.2px;top:263px;width:32.8px;height:34px;background:#4f4f4f;border-radius:8px"></div>
<svg style="left:1158.5px;top:263px" width="32.5" height="34" viewBox="0 0 32.5 34"><g fill="#fff"><rect x="4.4" y="9.2" width="24" height="3.1" rx="1.2"/><rect x="18.1" y="6.3" width="6.4" height="9" rx="1.4"/><rect x="4.4" y="21.4" width="24" height="3.1" rx="1.2"/><rect x="7.8" y="19" width="6.6" height="9" rx="1.4"/></g></svg>
<div class="a" style="left:1192.8px;top:263px;width:33px;height:34px;background:#4f4f4f;border-radius:8px;overflow:hidden"><div class="t" style="left:4.5px;top:5.6px;font-size:20.6px;letter-spacing:-0.5px">Aa</div></div>
<div class="a" style="left:1218.8px;top:254px;width:47.8px;height:49px;border:4.6px solid #ff0000;border-radius:10px;background:#292931"></div>
<div class="a" style="left:1227.1px;top:263px;width:33.7px;height:33.6px;background:#ec8a1c;border-radius:8px"></div>
<svg style="left:0;top:0" width="1280" height="932" viewBox="0 0 1280 932"><path d="M1235.6 288.1 L1246 277.7" stroke="#0c0a06" stroke-width="5.4" stroke-linecap="round" fill="none"/><circle cx="1248.7" cy="275" r="7.3" fill="#0c0a06"/><path d="M1248.4 275.3 L1258 265.7" stroke="#ec8a1c" stroke-width="5.2" fill="none"/><path d="M1251 279 L1258 272" stroke="#ec8a1c" stroke-width="0" fill="none"/><circle cx="1235.5" cy="288.2" r="1.1" fill="#ec8a1c"/></svg>
</div>
</body></html>
